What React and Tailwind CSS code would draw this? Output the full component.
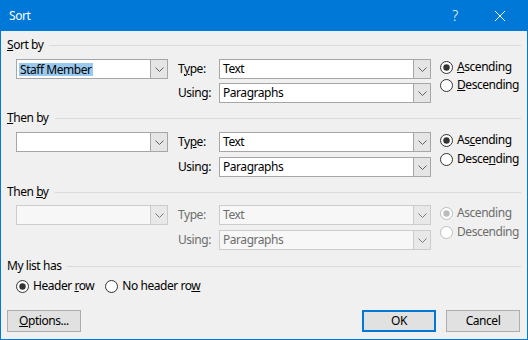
import React from 'react';

const Chevron = ({ disabled }) => (
  <svg width="9" height="5" viewBox="0 0 9 5" className="block">
    <path d="M0.5 0.5 L4.5 4.5 L8.5 0.5" fill="none" stroke={disabled ? '#7a7a7a' : '#5f5f5f'} strokeWidth="1" />
  </svg>
);

const Combo = ({ width, value, selected, disabled }) => (
  <div
    className={`flex shrink-0 h-[20px] border ${disabled ? 'border-[#cccccc] bg-[#f7f7f7] text-[#6d6d6d]' : 'border-[#a6a6a6] bg-white text-black'}`}
    style={{ width }}
  >
    <div className="flex-1 flex items-center pl-[2px] overflow-hidden whitespace-nowrap">
      {selected ? (
        <span className="bg-[#99c9ef] px-px leading-[13px]">{value}</span>
      ) : (
        <span className="pl-[1px]">{value}</span>
      )}
    </div>
    <div
      className={`w-[17px] shrink-0 flex items-center justify-center border-l ${disabled ? 'border-[#cccccc] bg-[#e8e8e8]' : 'border-[#a6a6a6] bg-[#e5e5e5]'}`}
    >
      <Chevron disabled={disabled} />
    </div>
  </div>
);

const Radio = ({ checked, disabled }) => (
  <svg width="13" height="13" viewBox="0 0 13 13" className="block shrink-0">
    <circle cx="6.5" cy="6.5" r="6" fill="white" stroke={disabled ? '#bcbcbc' : '#333333'} strokeWidth="1" />
    {checked && <circle cx="6.5" cy="6.5" r="3.2" fill={disabled ? '#bcbcbc' : '#333333'} />}
  </svg>
);

const RadioRow = ({ checked, disabled, children, className = '' }) => (
  <div className={`flex items-center shrink-0 h-[14px] ${className}`}>
    <Radio checked={checked} disabled={disabled} />
    <span className={`ml-[4px] whitespace-nowrap ${disabled ? 'text-[#6d6d6d]' : ''}`}>{children}</span>
  </div>
);

const GroupHeader = ({ children, className = '' }) => (
  <div className={`flex items-center h-[16px] ${className}`}>
    <span>{children}</span>
    <div className="flex-1 h-px bg-[#dadada] ml-[6px]" />
  </div>
);

const SortGroup = ({ value, selected, disabled, typeLabel, asc, desc, gap, radioTop, className = '' }) => (
  <div className={`flex ml-[9px] ${className}`}>
    <Combo width={152} value={value} selected={selected} disabled={disabled} />
    <div className="ml-[10px] shrink-0 flex flex-col" style={{ rowGap: gap }}>
      <div className="flex items-center h-[20px]">
        <span className={`w-[41px] shrink-0 ${disabled ? 'text-[#6d6d6d]' : ''}`}>{typeLabel}</span>
        <Combo width={212} value="Text" disabled={disabled} />
      </div>
      <div className="flex items-center h-[20px]">
        <span className={`w-[41px] shrink-0 ${disabled ? 'text-[#6d6d6d]' : ''}`}>Using:</span>
        <Combo width={212} value="Paragraphs" disabled={disabled} />
      </div>
    </div>
    <div className="ml-[9px] shrink-0 flex flex-col" style={{ rowGap: gap, paddingTop: radioTop }}>
      <RadioRow checked disabled={disabled}>{asc}</RadioRow>
      <RadioRow disabled={disabled}>{desc}</RadioRow>
    </div>
  </div>
);

const Button = ({ children, primary }) => (
  <button
    className={`w-[74px] h-[22px] bg-[#e1e1e1] flex items-center justify-center ${primary ? 'border-2 border-[#0078d7]' : 'border border-[#adadad]'}`}
  >
    {children}
  </button>
);

export default function App() {
  return (
    <div className="w-[528px] h-[340px] flex flex-col bg-[#f0f0f0] border-x border-b border-[#0078d7] text-[12px] leading-[16px] tracking-[-0.45px] text-black font-['Segoe_UI','Noto_Sans',sans-serif]">
      {/* Title bar */}
      <div className="h-[31px] shrink-0 bg-[#0078d7] text-white flex items-center">
        <span className="ml-[8px] text-[12px]">Sort</span>
        <div className="flex-1" />
        <span className="w-[20px] text-center text-[14px] font-light">?</span>
        <div className="w-[30px]" />
        <svg width="10" height="10" viewBox="0 0 10 10" className="block mr-[22px]">
          <path d="M0 0 L10 10 M10 0 L0 10" stroke="white" strokeWidth="1" />
        </svg>
      </div>

      {/* Content */}
      <div className="flex-1 flex flex-col pl-[6px] pr-[6px]">
        <GroupHeader className="mt-[6px]"><u>S</u>ort by</GroupHeader>
        <SortGroup
          className="mt-[6px]"
          value="Staff Member"
          selected
          gap={4}
          radioTop={1}
          typeLabel={<>T<u>y</u>pe:</>}
          asc={<><u>A</u>scending</>}
          desc={<><u>D</u>escending</>}
        />

        <GroupHeader className="mt-[7px]"><u>T</u>hen by</GroupHeader>
        <SortGroup
          className="mt-[6px]"
          value=""
          gap={5}
          radioTop={1}
          typeLabel={<>Ty<u>p</u>e:</>}
          asc={<>As<u>c</u>ending</>}
          desc={<>Desce<u>n</u>ding</>}
        />

        <GroupHeader className="mt-[7px]">Then <u>b</u>y</GroupHeader>
        <SortGroup
          className="mt-[5px]"
          value=""
          disabled
          gap={5}
          radioTop={1}
          typeLabel="Type:"
          asc="Ascending"
          desc="Descending"
        />

        <GroupHeader className="mt-[8px]">My list has</GroupHeader>
        <div className="flex items-center h-[16px] mt-[4px] ml-[9px]">
          <RadioRow checked>Header <u>r</u>ow</RadioRow>
          <RadioRow className="ml-[11px]">No header ro<u>w</u></RadioRow>
        </div>

        <div className="flex mt-[16px] pr-[1px]">
          <Button><u>O</u>ptions...</Button>
          <div className="flex-1" />
          <Button primary>OK</Button>
          <div className="w-[10px]" />
          <Button>Cancel</Button>
        </div>
      </div>
    </div>
  );
}
